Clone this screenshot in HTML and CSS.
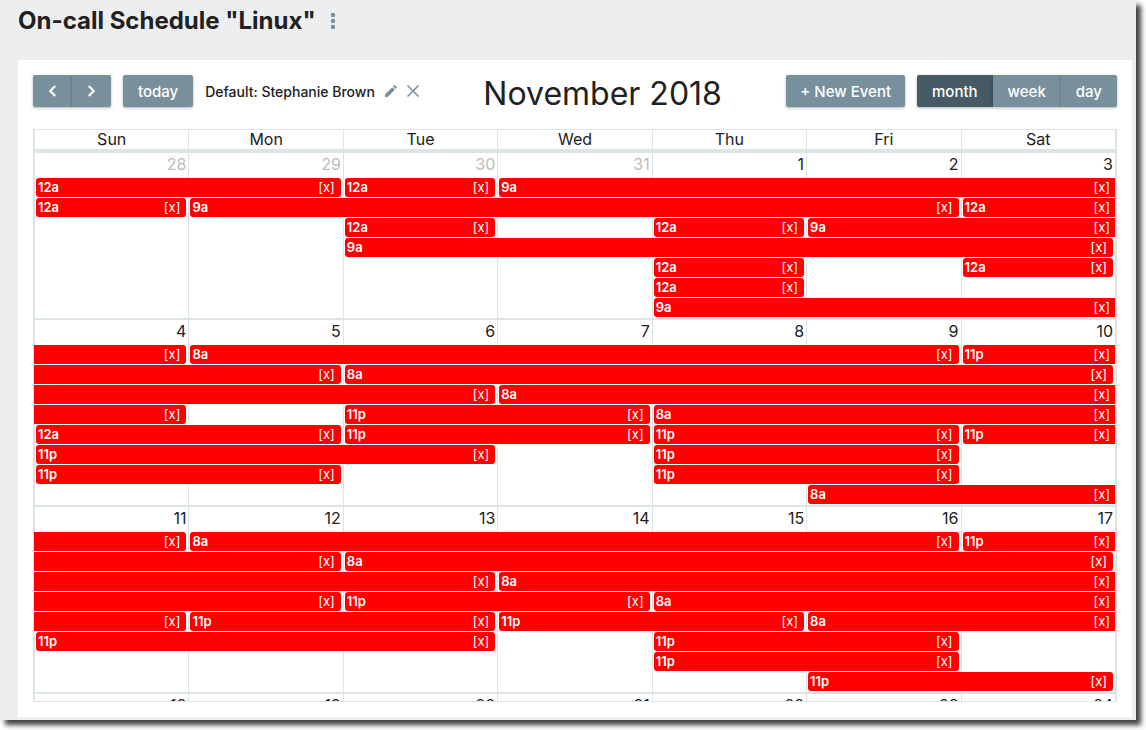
FILE: index.html
```html
<!DOCTYPE html>
<html lang="en">
<head>
    <meta charset="UTF-8">
    <meta name="viewport" content="width=device-width, initial-scale=1.0">
    <title>On-call Schedule</title>
    <link rel="stylesheet" href="styles.css">
</head>
<body>

<div class="window">
    <!-- Page header -->
    <header class="page-header">
        <h1>On-call Schedule "Linux"</h1>
        <button class="icon-btn" aria-label="More options">
            <svg width="6" height="18" viewBox="0 0 6 18" fill="currentColor">
                <circle cx="3" cy="3" r="2.2"/>
                <circle cx="3" cy="9" r="2.2"/>
                <circle cx="3" cy="15" r="2.2"/>
            </svg>
        </button>
    </header>

    <main class="panel">
        <!-- Calendar toolbar -->
        <div class="toolbar">
            <div class="toolbar-group">
                <div class="btn-group nav-group">
                    <button class="btn" aria-label="Previous month">
                        <svg width="10" height="14" viewBox="0 0 10 14" fill="none" stroke="currentColor" stroke-width="2.4"><path d="M8 1.5 2.5 7 8 12.5"/></svg>
                    </button>
                    <button class="btn" aria-label="Next month">
                        <svg width="10" height="14" viewBox="0 0 10 14" fill="none" stroke="currentColor" stroke-width="2.4"><path d="M2 1.5 7.5 7 2 12.5"/></svg>
                    </button>
                </div>
                <button class="btn">today</button>
                <div class="default-user">
                    <span>Default: Stephanie Brown</span>
                    <button class="icon-btn" aria-label="Edit default">
                        <svg width="12" height="12" viewBox="0 0 12 12" fill="currentColor"><path d="M0 12V9.5L7.3 2.2 9.8 4.7 2.5 12ZM8.1 1.4 9.2.3Q9.6 0 10 .3L11.7 2Q12 2.4 11.7 2.8L10.6 3.9Z"/></svg>
                    </button>
                    <button class="icon-btn" aria-label="Remove default">
                        <svg width="12" height="12" viewBox="0 0 12 12" fill="none" stroke="currentColor" stroke-width="1.5"><path d="M.5.5l11 11M11.5.5l-11 11"/></svg>
                    </button>
                </div>
            </div>

            <h2>November 2018</h2>

            <div class="toolbar-group">
                <button class="btn new-event">+ New Event</button>
                <div class="btn-group view-group">
                    <button class="btn active">month</button>
                    <button class="btn">week</button>
                    <button class="btn">day</button>
                </div>
            </div>
        </div>

        <!-- Month grid -->
        <div class="calendar">
            <table id="monthTable">
                <thead>
                    <tr>
                        <th>Sun</th>
                        <th>Mon</th>
                        <th>Tue</th>
                        <th>Wed</th>
                        <th>Thu</th>
                        <th>Fri</th>
                        <th>Sat</th>
                    </tr>
                </thead>
                <!-- Weeks will be added here -->
            </table>
        </div>
    </main>
</div>

<script>
// Event: [first column, number of days, start time, continues next week]
// An empty start time means the event began in an earlier week
const weeks = [
    {
        days: [28, 29, 30, 31, 1, 2, 3],
        otherMonth: 4,
        rows: [
            [[0, 2, '12a'], [2, 1, '12a'], [3, 4, '9a', true]],
            [[0, 1, '12a'], [1, 5, '9a'], [6, 1, '12a', true]],
            [[2, 1, '12a'], [4, 1, '12a'], [5, 2, '9a', true]],
            [[2, 5, '9a']],
            [[4, 1, '12a'], [6, 1, '12a']],
            [[4, 1, '12a']],
            [[4, 3, '9a', true]]
        ]
    },
    {
        days: [4, 5, 6, 7, 8, 9, 10],
        otherMonth: 0,
        rows: [
            [[0, 1, ''], [1, 5, '8a'], [6, 1, '11p', true]],
            [[0, 2, ''], [2, 5, '8a']],
            [[0, 3, ''], [3, 4, '8a', true]],
            [[0, 1, ''], [2, 2, '11p'], [4, 3, '8a', true]],
            [[0, 2, '12a'], [2, 2, '11p'], [4, 2, '11p'], [6, 1, '11p', true]],
            [[0, 3, '11p'], [4, 2, '11p']],
            [[0, 2, '11p'], [4, 2, '11p']],
            [[5, 2, '8a', true]]
        ]
    },
    {
        days: [11, 12, 13, 14, 15, 16, 17],
        otherMonth: 0,
        rows: [
            [[0, 1, ''], [1, 5, '8a'], [6, 1, '11p', true]],
            [[0, 2, ''], [2, 5, '8a']],
            [[0, 3, ''], [3, 4, '8a', true]],
            [[0, 2, ''], [2, 2, '11p'], [4, 3, '8a', true]],
            [[0, 1, ''], [1, 2, '11p'], [3, 2, '11p'], [5, 2, '8a', true]],
            [[0, 3, '11p'], [4, 2, '11p']],
            [[4, 2, '11p']],
            [[5, 2, '11p']]
        ]
    },
    {
        days: [18, 19, 20, 21, 22, 23, 24],
        otherMonth: 0,
        rows: []
    }
];

function renderEventRow(events) {
    let html = '';
    let col = 0;
    events.forEach(([start, span, time, continues]) => {
        html += '<td></td>'.repeat(start - col);
        const classes = ['event'];
        if (!time) classes.push('from-prev');
        if (continues) classes.push('to-next');
        html += `<td colspan="${span}"><div class="${classes.join(' ')}">
            <span class="time">${time}</span>
            <button class="remove" aria-label="Remove event">[x]</button>
        </div></td>`;
        col = start + span;
    });
    return `<tr>${html}${'<td></td>'.repeat(7 - col)}</tr>`;
}

const table = document.getElementById('monthTable');
weeks.forEach(week => {
    const tbody = document.createElement('tbody');
    const days = week.days.map((day, i) =>
        `<td class="${i < week.otherMonth ? 'day other-month' : 'day'}">${day}</td>`).join('');
    tbody.innerHTML = `<tr>${days}</tr>` + week.rows.map(renderEventRow).join('');
    table.appendChild(tbody);
});
</script>
</body>
</html>
```

FILE: styles.css
```css
/* styles.css */

* {
    box-sizing: border-box;
}

body {
    font-family: Inter, "Liberation Sans", sans-serif;
    font-size: 14px;
    color: #212121;
    background: #fff;
    margin: 0;
    padding: 0 10px 10px 0;
    height: 100vh;
    overflow: hidden;
}

button {
    font: inherit;
    border: none;
    padding: 0;
    cursor: pointer;
}

.window {
    display: flex;
    flex-direction: column;
    height: 100%;
    background: #edeef0;
    padding: 0 4px 3px 18px;
    box-shadow: 5px 5px 5px rgba(0, 0, 0, 0.75);
}

/* Page header */
.page-header {
    display: flex;
    align-items: center;
    gap: 14px;
    height: 41px;
    margin-bottom: 19px;
}

.page-header h1 {
    margin: 0;
    font-size: 24px;
    font-weight: 700;
}

.icon-btn {
    display: flex;
    background: none;
    color: #78909c;
}

.panel {
    display: flex;
    flex-direction: column;
    flex: 1;
    min-height: 0;
    background: #fff;
    padding: 15px;
}

/* Toolbar */
.toolbar {
    display: flex;
    justify-content: space-between;
    align-items: center;
    height: 32px;
    margin-bottom: 22px;
}

.toolbar h2 {
    margin: 0;
    padding-top: 4px;
    font-size: 32px;
    font-weight: 400;
    white-space: nowrap;
}

.toolbar-group {
    display: flex;
    align-items: center;
    gap: 12px;
}

.btn {
    display: flex;
    align-items: center;
    justify-content: center;
    height: 32px;
    padding: 0 15px;
    font-size: 15px;
    font-weight: 500;
    color: #fff;
    background: #78909c;
    border-radius: 2px;
    box-shadow: 0 1px 3px rgba(0, 0, 0, 0.3);
    white-space: nowrap;
}

.btn.new-event {
    padding: 0 14px;
}

.btn-group {
    display: flex;
}

.btn-group .btn {
    border-radius: 0;
}

.btn-group .btn:first-child {
    border-radius: 2px 0 0 2px;
}

.btn-group .btn:last-child {
    border-radius: 0 2px 2px 0;
}

.btn.active {
    background: #455a64;
}

.nav-group .btn {
    width: 39px;
}

.default-user {
    display: flex;
    align-items: center;
    gap: 10px;
    font-weight: 500;
    white-space: nowrap;
}

/* Month grid */
.calendar {
    flex: 1;
    min-height: 0;
    overflow: hidden;
    border: 1px solid #dde4e6;
    border-right-width: 2px;
}

table {
    width: 100%;
    table-layout: fixed;
    border-collapse: separate;
    border-spacing: 0;
}

th, td {
    padding: 0;
    border-left: 1px solid #dde4e6;
}

th {
    height: 23px;
    border-bottom: 4px solid #dde4e6;
    font-size: 16px;
    font-weight: 400;
    line-height: 19px;
}

td {
    height: 20px;
    vertical-align: top;
}

.day {
    height: 25px;
    padding: 1px 2px 0 0;
    font-size: 16px;
    line-height: 20px;
    text-align: right;
}

/* Separator between weeks */
tbody + tbody .day {
    height: 27px;
    border-top: 2px solid #dde4e6;
}

.other-month {
    color: #bcbcbc;
}

/* Events */
.event {
    display: flex;
    justify-content: space-between;
    align-items: center;
    height: 19px;
    margin: 0 2px 0 1px;
    padding: 0 6px 0 2px;
    color: #fff;
    background: #f00;
    border-radius: 3px;
    font-size: 13px;
    line-height: 19px;
}

.event.from-prev {
    margin-left: -1px;
    border-top-left-radius: 0;
    border-bottom-left-radius: 0;
}

.event.to-next {
    margin-right: 0;
    padding-right: 5px;
    border-top-right-radius: 0;
    border-bottom-right-radius: 0;
}

.time {
    font-weight: 600;
}

.remove {
    color: inherit;
    background: none;
}
```
